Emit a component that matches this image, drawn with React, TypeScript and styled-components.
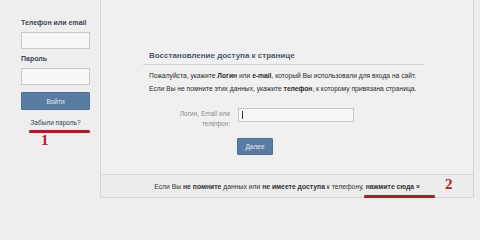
import React from 'react';
import styled, { createGlobalStyle } from 'styled-components';

const GlobalStyle = createGlobalStyle`
  html, body {
    margin: 0;
    padding: 0;
    background: #eeeeee;
  }
  body {
    font-family: 'Liberation Sans', Arial, sans-serif;
    color: #222;
  }
`;

const Page = styled.div`
  position: relative;
  width: 480px;
  height: 240px;
  display: flex;
  align-items: flex-start;
  overflow: hidden;
  background: #eeeeee;
`;

// Левая колонка с формой входа
const Sidebar = styled.div`
  width: 100px;
  box-sizing: border-box;
  padding: 18px 0 0 21px;
  display: flex;
  flex-direction: column;
`;

const SideLabel = styled.div`
  font-size: 7px;
  font-weight: bold;
  color: #3d4652;
  line-height: 10px;
  margin-top: ${({ $top }: { $top?: number }) => $top ?? 0}px;
`;

const SideInput = styled.div`
  width: 69px;
  height: 17px;
  box-sizing: border-box;
  margin-top: 4px;
  background: #f7f7f7;
  border: 1px solid #c9c9c9;
`;

const BlueButton = styled.div<{ $w: number; $h: number }>`
  width: ${({ $w }) => $w}px;
  height: ${({ $h }) => $h}px;
  box-sizing: border-box;
  background: #5b7ca2;
  border: 1px solid #4f6f94;
  border-radius: 1px;
  color: #e4ebf3;
  font-size: 6.5px;
  display: flex;
  align-items: center;
  justify-content: center;
`;

const LoginButton = styled(BlueButton)`
  margin-top: 7px;
`;

const ForgotLink = styled.div`
  width: 69px;
  margin-top: 8px;
  text-align: center;
  font-size: 6.5px;
  color: #2f3a48;
  line-height: 9px;
`;

// Основная панель
const Panel = styled.div`
  width: 374px;
  height: 198px;
  box-sizing: border-box;
  border: 1px solid #d6d6d6;
  border-top: none;
  background: #f0f0f0;
  display: flex;
  flex-direction: column;
`;

const Content = styled.div`
  flex: 1;
  padding: 50px 0 0 42px;
`;

const Title = styled.div`
  width: 281px;
  box-sizing: border-box;
  padding: 0 0 3px 6px;
  border-bottom: 1px solid #d2d2d2;
  font-size: 8px;
  font-weight: bold;
  color: #4a576b;
  line-height: 11px;
`;

const Text = styled.div`
  padding: 4px 0 0 6px;
  font-size: 6.7px;
  line-height: 13px;
  color: #2a2a2a;
  white-space: nowrap;
`;

const FormRow = styled.div`
  display: flex;
  align-items: flex-start;
  margin-top: 13px;
`;

const FieldLabel = styled.div`
  width: 87px;
  text-align: right;
  font-size: 6.5px;
  line-height: 10px;
  color: #8a8a8a;
  margin-top: 1px;
`;

const FieldInput = styled.div`
  width: 116px;
  height: 14px;
  margin-left: 8px;
  box-sizing: border-box;
  background: #f8f8f8;
  border: 1px solid #c6c6c6;
  padding: 2px 0 0 3px;
  &::before {
    content: '';
    display: block;
    width: 1px;
    height: 8px;
    background: #333;
  }
`;

const NextButton = styled(BlueButton)`
  margin: 9px 0 0 94px;
`;

const Footer = styled.div`
  height: 22px;
  border-top: 1px solid #d6d6d6;
  background: #ececec;
  display: flex;
  align-items: center;
  justify-content: center;
  font-size: 6.8px;
  color: #333;
  white-space: nowrap;
`;

// Пометки поверх скриншота
const Underline = styled.div<{ $x: number; $y: number; $w: number }>`
  position: absolute;
  left: ${({ $x }) => $x}px;
  top: ${({ $y }) => $y}px;
  width: ${({ $w }) => $w}px;
  height: 3px;
  border-radius: 2px;
  background: #a3202e;
  box-shadow: 0 0 1px rgba(163, 32, 46, 0.5);
`;

const Mark = styled.div<{ $x: number; $y: number }>`
  position: absolute;
  left: ${({ $x }) => $x}px;
  top: ${({ $y }) => $y}px;
  font-family: 'Liberation Serif', 'Times New Roman', serif;
  font-weight: bold;
  font-size: 15px;
  line-height: 15px;
  color: #b01f2a;
`;

const App: React.FC = () => {
  return (
    <>
      <GlobalStyle />
      <Page>
        <Sidebar>
          <SideLabel>Телефон или email</SideLabel>
          <SideInput />
          <SideLabel $top={5}>Пароль</SideLabel>
          <SideInput />
          <LoginButton $w={69} $h={18}>Войти</LoginButton>
          <ForgotLink>Забыли пароль?</ForgotLink>
        </Sidebar>
        <Panel>
          <Content>
            <Title>Восстановление доступа к странице</Title>
            <Text>
              Пожалуйста, укажите <b>Логин</b> или <b>e-mail</b>, который Вы использовали для входа на сайт.
              <br />
              Если Вы не помните этих данных, укажите <b>телефон</b>, к которому привязана страница.
            </Text>
            <FormRow>
              <FieldLabel>
                Логин, Email или
                <br />
                телефон:
              </FieldLabel>
              <FieldInput />
            </FormRow>
            <NextButton $w={36} $h={17}>Далее</NextButton>
          </Content>
          <Footer>
            Если Вы&nbsp;<b>не помните</b>&nbsp;данных или&nbsp;<b>не имеете доступа</b>&nbsp;к телефону,&nbsp;
            <b>нажмите сюда »</b>
          </Footer>
        </Panel>
        <Underline $x={29} $y={130} $w={61} />
        <Mark $x={41} $y={133}>1</Mark>
        <Underline $x={364} $y={195} $w={71} />
        <Mark $x={445} $y={177}>2</Mark>
      </Page>
    </>
  );
};

export default App;
